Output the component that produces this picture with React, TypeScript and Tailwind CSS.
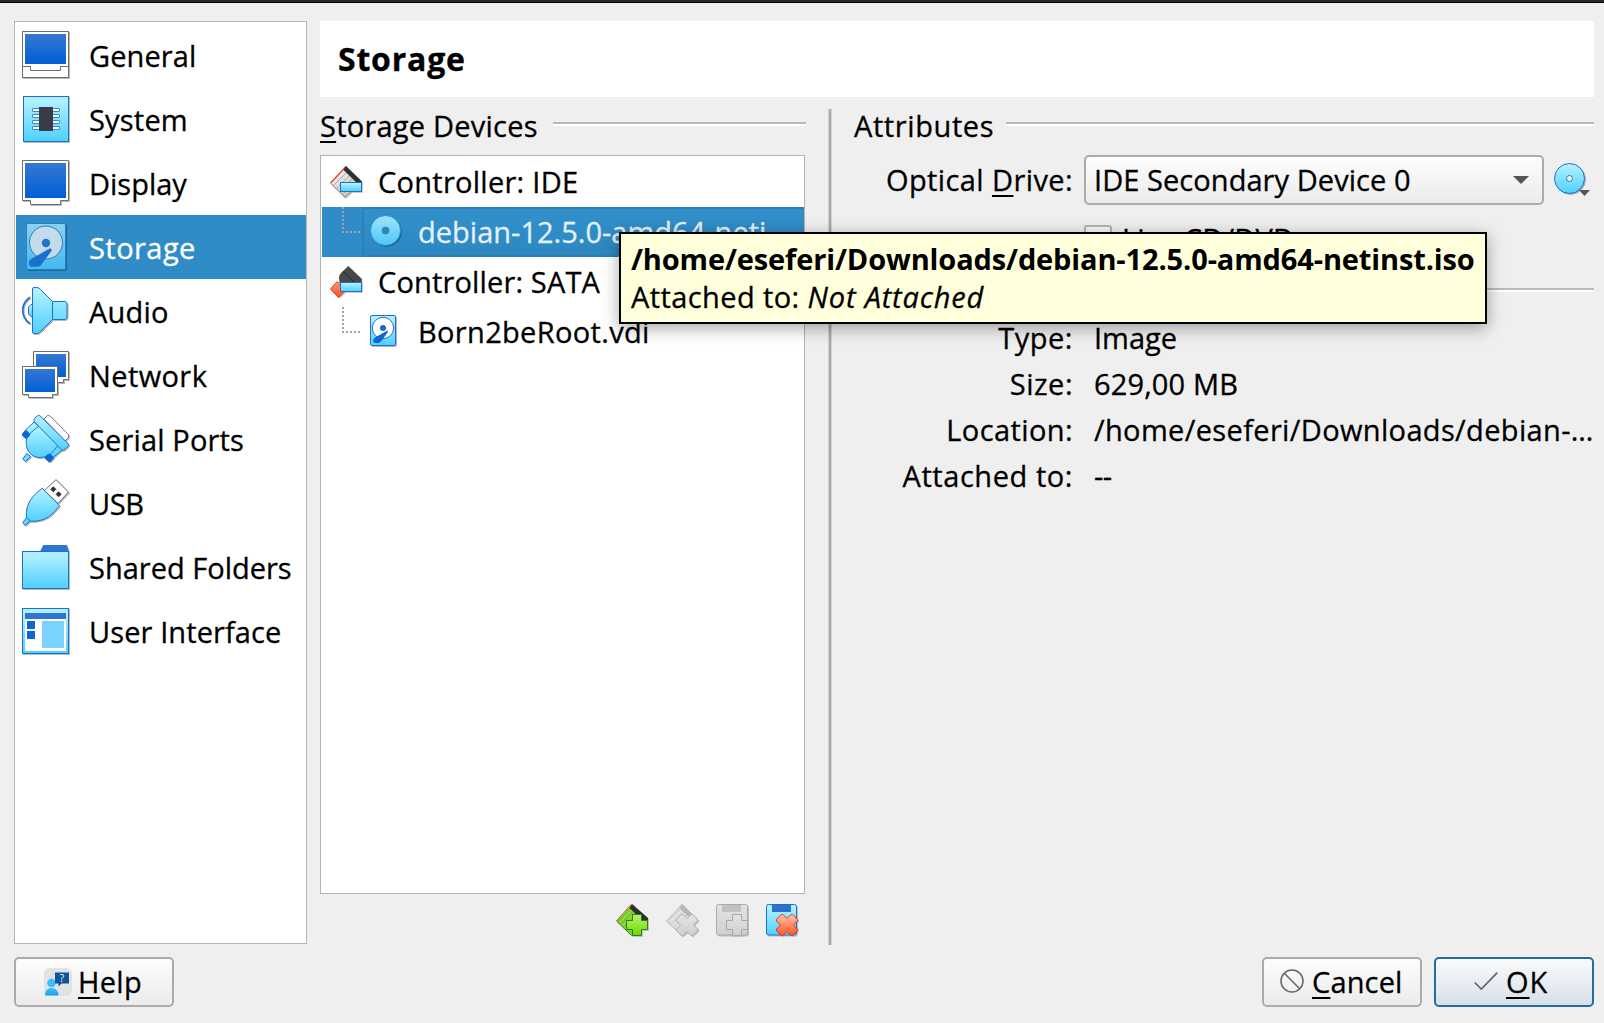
import React from "react";

function Gradients() {
  return (
    <svg width="0" height="0" className="absolute" aria-hidden="true">
      <defs>
        <linearGradient id="cyan" x1="0" y1="0" x2="0" y2="1">
          <stop offset="0.1" stopColor="#aef0ff" />
          <stop offset="1" stopColor="#4fd0ff" />
        </linearGradient>
        <linearGradient id="screen" x1="0" y1="0" x2="0" y2="1">
          <stop offset="0" stopColor="#3578d3" />
          <stop offset="1" stopColor="#0060d4" />
        </linearGradient>
        <linearGradient id="cyanDim" x1="0" y1="0" x2="0" y2="1">
          <stop offset="0" stopColor="#8bd3ee" />
          <stop offset="1" stopColor="#41b9ee" />
        </linearGradient>
        <linearGradient id="discDim" x1="0" y1="0" x2="0" y2="1">
          <stop offset="0" stopColor="#9fe6fb" />
          <stop offset="1" stopColor="#4bc6f8" />
        </linearGradient>
        <linearGradient id="green" x1="0" y1="0" x2="0" y2="1">
          <stop offset="0" stopColor="#b4f56e" />
          <stop offset="1" stopColor="#6fd800" />
        </linearGradient>
        <linearGradient id="red" x1="0" y1="0" x2="0" y2="1">
          <stop offset="0" stopColor="#ffc4ab" />
          <stop offset="1" stopColor="#ff5420" />
        </linearGradient>
        <linearGradient id="orange" x1="0" y1="0" x2="0" y2="1">
          <stop offset="0" stopColor="#ff9a70" />
          <stop offset="1" stopColor="#fb4f1c" />
        </linearGradient>
        <linearGradient id="metal" x1="0" y1="0" x2="1" y2="1">
          <stop offset="0" stopColor="#ffffff" />
          <stop offset="1" stopColor="#b5b5b5" />
        </linearGradient>
        <linearGradient id="disabled" x1="0" y1="0" x2="0" y2="1">
          <stop offset="0" stopColor="#e3e3e3" />
          <stop offset="1" stopColor="#cfcfcf" />
        </linearGradient>
        <linearGradient id="person" x1="0" y1="0" x2="0" y2="1">
          <stop offset="0" stopColor="#43c0fb" />
          <stop offset="1" stopColor="#1c9fe8" />
        </linearGradient>
      </defs>
    </svg>
  );
}

function Icon48({ children }: { children: React.ReactNode }) {
  return (
    <svg width="48" height="48" viewBox="0 0 48 48" className="overflow-visible drop-shadow-[1px_1px_0px_rgba(0,0,0,0.28)]">
      {children}
    </svg>
  );
}

function GeneralIcon() {
  return (
    <Icon48>
      <rect x="0.5" y="0.5" width="46" height="46" fill="#fff" stroke="#6e6e6e" />
      <rect x="3" y="3" width="41" height="30" fill="url(#screen)" />
      <path d="M0.5 35.5H8.5V39.5H38.5V35.5H46.5" fill="none" stroke="#6e6e6e" />
    </Icon48>
  );
}

function SystemIcon() {
  return (
    <Icon48>
      <rect x="1.5" y="1.5" width="45" height="45" fill="url(#cyan)" stroke="#1f6fd3" />
      {[13.5, 19.5, 25.5, 31.5].map((y) => (
        <rect key={y} x="10.5" y={y} width="27" height="3" rx="0.5" fill="#fff" stroke="#3c86cf" />
      ))}
      <rect x="17" y="12" width="14" height="24" fill="#393c46" />
    </Icon48>
  );
}

function DisplayIcon() {
  return (
    <Icon48>
      <path d="M0.5 1.5H46.5V41.5H38.5V45.5H8.5V41.5H0.5Z" fill="#fff" stroke="#6e6e6e" />
      <rect x="3" y="4" width="41" height="35" fill="url(#screen)" />
    </Icon48>
  );
}

function StorageIcon() {
  return (
    <Icon48>
      <rect x="4.5" y="0.5" width="39" height="46" rx="1.5" fill="url(#cyanDim)" stroke="#2a7fcb" />
      <circle cx="24" cy="19.5" r="16.5" fill="#c3dcec" stroke="#2e78c4" />
      <circle cx="24" cy="20" r="4.2" fill="#1f74c9" />
      <path d="M28.7 25.2L29.9 27.4L18.7 42.5L16.3 43.7H8.7L7 41.6L7.2 37.8L10 35.5L26.3 26.2Z" fill="#1b70cd" />
    </Icon48>
  );
}

function AudioIcon() {
  return (
    <Icon48>
      <path d="M8 10.3C2.5 14 0.7 18.5 0.7 23S2.5 33 8 36.7" fill="none" stroke="#1f6fd3" strokeWidth="1.7" />
      <path d="M10.5 17.5H9L6.5 20V27L9 29.5H10.5Z" fill="url(#cyan)" stroke="#1f6fd3" />
      <path
        d="M10.5 2Q10.5 0.5 12 0.5H15Q17 0.5 18.5 2.5L30.5 14.5H43Q45 15 45 17V30Q45 32 43 32.5H30.5L18.5 44.5Q16.5 46.5 15 46.5H12Q10.5 46.5 10.5 45Z"
        fill="url(#cyan)"
        stroke="#1f6fd3"
      />
      <path d="M30.5 14.5V32.5" stroke="#1f6fd3" />
    </Icon48>
  );
}

function NetworkIcon() {
  return (
    <Icon48>
      <path d="M11.5 0.5H46.5V28.5H41.5V31.5H11.5Z" fill="#fff" stroke="#6e6e6e" />
      <rect x="14" y="3" width="30" height="23" fill="url(#screen)" />
      <path d="M0.5 15.5H35.5V43.5H30.5V46.5H6.5V43.5H0.5Z" fill="#fff" stroke="#6e6e6e" />
      <rect x="3" y="18" width="30" height="23" fill="url(#screen)" />
    </Icon48>
  );
}

function SerialIcon() {
  return (
    <Icon48>
      <path d="M22 4L25.2 0.7Q26.5 0 28 0.8L46.3 19.5Q47 21 46.3 22.5L43 26Z" fill="#fff" stroke="#7c7c7c" />
      <path d="M12 7L17 12L7.5 20L3 15.5Z M40.5 34.5L35 29.5L26 38L30.5 43Z" fill="url(#cyan)" stroke="#1f6fd3" />
      <path d="M4.7 38.5L8.7 41.5L3.5 46.5L0.7 44Z" fill="#6fdbff" stroke="#1f6fd3" />
      <path
        d="M17.3 10.7L36.3 29.3C32 36 28 42 18 42.5C9 42.5 3.5 35 4.2 26C4.8 20 9 17.5 17.3 10.7Z"
        fill="url(#cyan)"
        stroke="#1f6fd3"
      />
      <path
        d="M0 18.8L3 15.6Q4 15 5 15.8L8 18.8V20.6L5 23.6H3.4L0 20.600Z M22.800 42.400L25.600 39.200L28 38.600L31.600 42.200V43.800L28.400 47H26.600L22.800 43.600Z"
        fill="#0d63d2"
      />
      <path
        d="M12.3 3.6L15.3 0.8Q16.7 0 18 0.8L46.5 29Q47 30.5 46 31.5L42 35Q40.7 35.7 39.5 34.7L12.3 6.7Q11.5 5 12.3 3.6Z"
        fill="url(#cyan)"
        stroke="#1f6fd3"
      />
    </Icon48>
  );
}

function UsbIcon() {
  return (
    <Icon48>
      <path d="M34 0.6L46.5 13L36 24.5L22.5 11.5Z" fill="#fff" stroke="#6e6e6e" />
      <path
        d="M31.300 7.800L33.800 10.300L31.300 12.800L28.800 10.300Z M36.600 12.800L39.100 15.300L36.600 17.800L34.100 15.300Z"
        fill="#333"
        stroke="#333"
        strokeLinejoin="round"
      />
      <path d="M4.7 38.7L0.7 43.3L3 46.5L8 42Z" fill="#5fd6ff" stroke="#1f6fd3" />
      <path d="M20.3 9.3L37.5 26.6C31 35 24 43 8.5 42.3L4.5 38.5C3 25 11 16 20.3 9.3Z" fill="url(#cyan)" stroke="#1f6fd3" />
    </Icon48>
  );
}

function FolderIcon() {
  return (
    <Icon48>
      <path d="M18 8.5L21.3 2H44.7L47 8.5Z" fill="#2f76d2" />
      <rect x="0.5" y="8.5" width="46" height="37" fill="url(#cyan)" stroke="#1f6fd3" />
    </Icon48>
  );
}

function InterfaceIcon() {
  return (
    <Icon48>
      <rect x="0.5" y="1.5" width="46" height="45" fill="url(#cyan)" stroke="#1f6fd3" />
      <rect x="3" y="6" width="41" height="6" fill="#2f76d2" />
      <rect x="3" y="12" width="41" height="32" fill="#fff" />
      <path d="M5 14h8v8h-8z M5 24h8v8h-8z" fill="#0f66d4" />
      <rect x="20" y="14" width="22" height="27" fill="#7ad3ff" />
    </Icon48>
  );
}

function Icon32({ children }: { children: React.ReactNode }) {
  return (
    <svg width="32" height="32" viewBox="0 0 32 32" className="shrink-0 overflow-visible drop-shadow-[1px_1px_0px_rgba(0,0,0,0.2)]">
      {children}
    </svg>
  );
}

function IdeIcon() {
  return (
    <Icon32>
      <path d="M16 0.5L31.5 16L15 31.5L0.5 17Z" fill="url(#metal)" />
      <path d="M3.5 19.500L17.500 5.500M6.500 22.500L20.500 8.500M9.500 25.500L23.500 11.500M12.500 28.500L26 15" stroke="#a9a9a9" />
      <path d="M16 0.5L0.5 17" stroke="#e0401a" strokeWidth="1.2" />
      <path d="M0.5 17L15 31.3L21 26" fill="none" stroke="#7c7c7c" />
      <path d="M16 0L32 15.5V17H27L13.5 4Z" fill="#2f2f2f" />
      <rect x="10.5" y="16.5" width="21" height="9" fill="url(#cyan)" stroke="#1f6fd3" />
    </Icon32>
  );
}

function SataIcon() {
  return (
    <Icon32>
      <path d="M7 15.5L16 24.5L8.5 31.5L0.5 23Z" fill="url(#orange)" stroke="#d5431c" />
      <path d="M18.3 0L31.7 12.7V17H9.5L9 11.5Q9 9 11 7Z" fill="#484848" />
      <path d="M13 5.5L25 17" stroke="#222" />
      <rect x="10.5" y="16.5" width="21" height="9" fill="url(#cyan)" stroke="#1f6fd3" />
    </Icon32>
  );
}

function DiscIcon({ dim = false }: { dim?: boolean }) {
  return (
    <svg width="32" height="32" viewBox="0 0 32 32" className="shrink-0 overflow-visible drop-shadow-[1px_1px_0px_rgba(0,0,0,0.28)]">
      <circle cx="15.5" cy="15.5" r="15" fill={dim ? "url(#discDim)" : "url(#cyan)"} stroke={dim ? "#2a8fd6" : "#1f6fd3"} />
      <circle
        cx="15.5"
        cy="15.5"
        r="3"
        fill={dim ? "#2b88c8" : "#e8f6fc"}
        stroke={dim ? "#3a7fae" : "#2f76c6"}
        strokeWidth={dim ? 1.5 : 1}
      />
    </svg>
  );
}

function HddIcon() {
  return (
    <svg width="27" height="32" viewBox="0 0 27 32" className="shrink-0 overflow-visible drop-shadow-[1px_1px_0px_rgba(0,0,0,0.28)]">
      <rect x="0.5" y="0.5" width="25" height="30" rx="1.5" fill="url(#cyan)" stroke="#1f6fd3" />
      <circle cx="13" cy="13" r="10.7" fill="#fff" stroke="#1f6fd3" />
      <circle cx="13" cy="13" r="3" fill="#1668d3" />
      <path d="M17.5 15.5L18 17L11 26.5L8.5 28H4L3 25L5 22.5Z" fill="#1463d2" />
    </svg>
  );
}

const PLUS = "M16.5 10.5H25.5V16.5H31.5V25.5H25.5V31.5H16.5V25.5H10.5V16.5H16.5Z";
const CROSS =
  "M15.3 10.5H17L21 14.5L25 10.5H26.7L31.5 15.3V17L27.5 21L31.5 25V26.7L26.7 31.5H25L21 27.5L17 31.5H15.3L10.5 26.7V25L14.5 21L10.5 17V15.3Z";

function AddControllerIcon() {
  return (
    <Icon32>
      <path d="M16 0.5L31.5 16L16 31.5L0.5 17Z" fill="#79cc2c" />
      <path d="M3.5 18.5L17.5 4.5M6.5 21.5L20.5 7.5M9.5 24.5L23.5 10.5" stroke="#a4e85f" />
      <path d="M0.5 17L15.5 31.5" stroke="#45861a" />
      <path d="M15 0.5L0.5 17" stroke="#d9511c" />
      <path d="M16 0L32 14V17H27L13.5 4Z" fill="#2d2d2d" />
      <path d={PLUS} fill="url(#green)" stroke="#2f7d12" />
    </Icon32>
  );
}

function RemoveControllerIcon() {
  return (
    <Icon32>
      <path d="M16 0.5L31.5 16L16 31.5L0.5 17Z" fill="#d9d9d9" stroke="#bdbdbd" />
      <path d="M3.5 18.5L17.5 4.5M6.5 21.5L20.5 7.5M9.5 24.5L23.5 10.5" stroke="#f0f0f0" />
      <path d="M16 0L26 10L22 12.5L13.5 4Z" fill="#b6b6b6" />
      <path d={CROSS} fill="url(#disabled)" stroke="#aeaeae" />
    </Icon32>
  );
}

function AddAttachmentIcon() {
  return (
    <Icon32>
      <rect x="0.5" y="0.5" width="31" height="30.5" rx="2" fill="url(#disabled)" stroke="#ababab" />
      <rect x="6" y="1" width="19" height="7" fill="#c1c1c1" />
      <path d={PLUS} fill="url(#disabled)" stroke="#a9a9a9" />
    </Icon32>
  );
}

function RemoveAttachmentIcon() {
  return (
    <Icon32>
      <rect x="0.5" y="0.5" width="30" height="30.5" rx="2" fill="url(#cyan)" stroke="#1a6fd0" />
      <rect x="6" y="1" width="19" height="7" fill="#2b72d0" />
      <path d={CROSS} fill="url(#red)" stroke="#cf3a10" />
    </Icon32>
  );
}

function HelpIcon() {
  return (
    <svg width="28" height="28" viewBox="0 0 28 28" className="mr-[6px] shrink-0">
      <rect width="28" height="28" rx="6" fill="#e2e2e2" />
      <circle cx="7.500" cy="15" r="4.200" fill="#39bdf8" />
      <path d="M1 27.500C1 22.500 3.500 20 7.500 20S14.500 22.500 14.500 27.500Z" fill="url(#person)" />
      <path d="M11 4.500H25V15.500H17.500L14.500 18.500V15.500H11Z" fill="#0f5598" />
      <text x="18" y="13.500" fontSize="10" textAnchor="middle" fill="#fff" fontFamily="Open Sans">?</text>
    </svg>
  );
}

function GroupTitle({ children }: { children: React.ReactNode }) {
  return (
    <div className="flex h-10 items-center">
      {children}
      <div className="h-[4px] flex-1 border-t-2 border-[#b9b9b9] bg-white" />
    </div>
  );
}

function Key({ children }: { children: React.ReactNode }) {
  return <span className="underline decoration-2 underline-offset-[4px] [text-decoration-skip-ink:none]">{children}</span>;
}

function Branch() {
  return (
    <svg width="20" height="50" className="shrink-0">
      <path d="M1 0V26" stroke="#a3a3a3" strokeWidth="2" strokeDasharray="2 2" />
      <path d="M0 25H20" stroke="#a3a3a3" strokeWidth="2" strokeDasharray="2 2" />
    </svg>
  );
}

const categories = [
  { name: "General", icon: <GeneralIcon />, tracking: "tracking-[0.1px]" },
  { name: "System", icon: <SystemIcon />, tracking: "tracking-[0.2px]" },
  { name: "Display", icon: <DisplayIcon />, tracking: "tracking-[0px]" },
  { name: "Storage", icon: <StorageIcon />, tracking: "tracking-[0.45px]" },
  { name: "Audio", icon: <AudioIcon />, tracking: "tracking-[0.2px]" },
  { name: "Network", icon: <NetworkIcon />, tracking: "tracking-[0.4px]" },
  { name: "Serial Ports", icon: <SerialIcon />, tracking: "tracking-[0.14px]" },
  { name: "USB", icon: <UsbIcon />, tracking: "tracking-[-0.4px]" },
  { name: "Shared Folders", icon: <FolderIcon />, tracking: "tracking-[0px]" },
  { name: "User Interface", icon: <InterfaceIcon />, tracking: "tracking-[0.1px]" },
];

const details = [
  { label: "Type:", value: "Image", l: "tracking-[0.5px]", v: "tracking-[0px]" },
  { label: "Size:", value: "629,00 MB", l: "tracking-[0.5px]", v: "tracking-[0.15px]" },
  { label: "Location:", value: "/home/eseferi/Downloads/debian-…", l: "tracking-[0.4px]", v: "tracking-[0.35px]" },
  { label: "Attached to:", value: "--", l: "tracking-[0.56px]", v: "tracking-[-0.5px]" },
];

export default function App() {
  return (
    <div className="relative flex h-[1023px] w-[1604px] flex-col overflow-hidden bg-[#efefef] font-['Open_Sans',sans-serif] text-[29px] leading-[40px] whitespace-nowrap text-black [-webkit-text-stroke:0.3px_currentColor]">
      <Gradients />
      <div className="h-[3px] border-b border-black bg-[#2b2829]" />

      <div className="mt-[18px] flex h-[923px] gap-[13px] pr-[10px] pl-[14px]">
        <nav className="w-[293px] shrink-0 border border-[#b4b4b4] bg-white pt-px pl-px">
          {categories.map((c) => (
            <div
              key={c.name}
              className={
                c.name === "Storage"
                  ? "flex h-16 items-center bg-[#308cc6] pl-[6px] text-white"
                  : "flex h-16 items-center pl-[6px]"
              }
            >
              {c.icon}
              <span className={`mt-[2px] ml-[19px] ${c.tracking}`}>{c.name}</span>
            </div>
          ))}
        </nav>

        <div className="flex min-w-0 flex-1 flex-col">
          <header className="h-[76px] bg-white pl-[18px] text-[32px] leading-[75px] font-bold tracking-[0.79px]">
            Storage
          </header>

          <div className="flex min-h-0 flex-1">
            <section className="w-[486px] shrink-0 pt-[7px]">
              <GroupTitle>
                <span className="mt-[3px] mr-[15px] tracking-[0.23px]">
                  <Key>S</Key>torage Devices
                </span>
              </GroupTitle>
              <div className="mt-[11px] h-[739px] w-[485px] border border-[#b4b4b4] bg-white pt-px pl-px">
                <div className="flex h-[50px] items-center pl-2">
                  <IdeIcon />
                  <span className="ml-4 tracking-[0.27px]">Controller: IDE</span>
                </div>
                <div className="flex h-[50px] items-center bg-[#308cc6] pl-5">
                  <Branch />
                  <div className="flex h-full flex-1 items-center rounded-[2px] border-2 border-r-0 border-[#2c80b6] bg-linear-to-b from-[#3190cb] to-[#2d88c0] pl-[6px]">
                    <div className="-mt-[2px]">
                      <DiscIcon dim />
                    </div>
                    <span className="ml-4 tracking-[0.01px] text-[#e4f0f8]">debian-12.5.0-amd64-neti</span>
                  </div>
                </div>
                <div className="flex h-[50px] items-center pl-2">
                  <SataIcon />
                  <span className="ml-4 tracking-[0.15px]">Controller: SATA</span>
                </div>
                <div className="flex h-[50px] items-center pl-5">
                  <Branch />
                  <div className="-mt-[2px] ml-2">
                    <HddIcon />
                  </div>
                  <span className="ml-[21px] tracking-[0.33px]">Born2beRoot.vdi</span>
                </div>
              </div>
              <div className="mt-[10px] ml-[296px] flex gap-[18px]">
                <AddControllerIcon />
                <RemoveControllerIcon />
                <AddAttachmentIcon />
                <RemoveAttachmentIcon />
              </div>
            </section>

            <div className="mt-3 -mb-px mr-[22px] ml-[22px] w-1 shrink-0 border-x border-[#d2d2d2] bg-[#a9a9a9]" />

            <section className="min-w-0 flex-1 pt-[7px]">
              <GroupTitle>
                <span className="mt-[3px] mr-[12px] tracking-[0.6px]">Attributes</span>
              </GroupTitle>
              <div className="mt-[11px] flex h-[50px] items-center">
                <span className="w-[219px] text-right tracking-[0.4px]">
                  Optical <Key>D</Key>rive:
                </span>
                <div className="ml-[11px] flex h-[50px] w-[460px] items-center justify-between rounded-[5px] border-2 border-[#ababab] bg-linear-to-b from-[#fdfdfd] to-[#ebebeb] pr-[13px] pl-2">
                  <span className="tracking-[0.06px]">IDE Secondary Device 0</span>
                  <svg width="16" height="8">
                    <path d="M0 0H16L8 8Z" fill="#555" />
                  </svg>
                </div>
                <div className="relative -mt-[2px] ml-[10px]">
                  <DiscIcon />
                  <svg width="11" height="6" className="absolute top-[27px] left-[25px]">
                    <path d="M0 0H11L5.5 6Z" fill="#555" />
                  </svg>
                </div>
              </div>
              <div className="mt-[20px] flex h-[28px] items-center pl-[230px]">
                <div className="size-[28px] rounded-[3px] border-2 border-[#b4b4b4] bg-[#f8f8f8]" />
                <span className="ml-[10px] tracking-[0.2px]">
                  <Key>L</Key>ive CD/DVD
                </span>
              </div>
              <div className="mt-[17px]">
                <GroupTitle>
                  <span className="w-[160px]" />
                </GroupTitle>
              </div>
              <dl className="mt-[5px]">
                {details.map((d) => (
                  <div key={d.label} className="flex h-[46px] items-center">
                    <dt className={`w-[219px] text-right ${d.l}`}>{d.label}</dt>
                    <dd className={`ml-[21px] ${d.v}`}>{d.value}</dd>
                  </div>
                ))}
              </dl>
            </section>
          </div>
        </div>
      </div>

      <footer className="mt-[13px] flex h-[50px] pr-[10px] pl-[14px]">
        <button className="flex h-[50px] w-40 items-center rounded-[5px] border-2 border-[#ababab] bg-linear-to-b from-[#fdfdfd] to-[#ebebeb] pl-[28px]">
          <HelpIcon />
          <span className="tracking-[0.3px]">
            <Key>H</Key>elp
          </span>
        </button>
        <button className="ml-auto flex h-[50px] w-40 items-center rounded-[5px] border-2 border-[#ababab] bg-linear-to-b from-[#fdfdfd] to-[#ebebeb] pl-[16px]">
          <svg width="24" height="24" viewBox="0 0 24 24" className="mr-[8px] -mt-[2px]" fill="none" stroke="#5f666b" strokeWidth="1.5">
            <circle cx="12" cy="12" r="11" />
            <path d="M4.3 4.3L19.7 19.7" />
          </svg>
          <span className="tracking-[0.15px]">
            <Key>C</Key>ancel
          </span>
        </button>
        <button className="ml-3 flex h-[50px] w-40 items-center rounded-[5px] border-2 border-[#246c9c] bg-linear-to-b from-[#fafbfc] to-[#d7e0e8] pl-[38px]">
          <svg width="24" height="18" viewBox="0 0 24 18" className="mr-[8px] -mt-[2px]" fill="none" stroke="#5f666b" strokeWidth="1.7">
            <path d="M0.7 10.5L7.3 17L23.3 0.7" />
          </svg>
          <span className="tracking-[1px]">
            <Key>O</Key>K
          </span>
        </button>
      </footer>

      <div className="absolute top-[232px] left-[619px] h-[92px] w-[868px] border-2 border-black bg-[#ffffdc] pt-[6px] pl-[10px] shadow-[0_4px_16px_rgba(0,0,0,0.35)]">
        <div className="leading-[37px] font-bold tracking-[-0.13px] [-webkit-text-stroke:0px]">
          /home/eseferi/Downloads/debian-12.5.0-amd64-netinst.iso
        </div>
        <div className="leading-[39px] tracking-[0.4px]">
          Attached to: <em className="tracking-[0.83px]">Not Attached</em>
        </div>
      </div>
    </div>
  );
}
